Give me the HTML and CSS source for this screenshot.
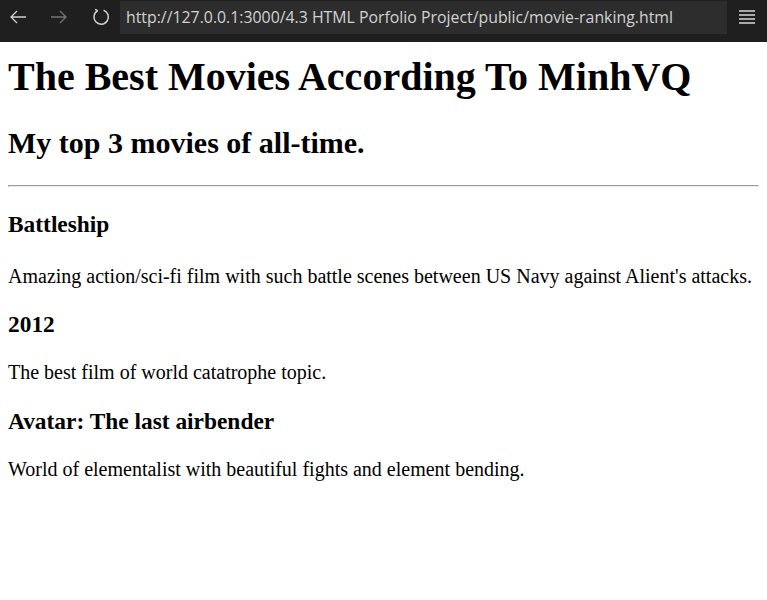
FILE: index.html
```html
<!DOCTYPE html>
<html>
<head>
<meta charset="utf-8">
<link rel="stylesheet" href="styles.css">
</head>
<body>
<div class="toolbar">
  <span class="nav-btn back">
    <svg width="18" height="16" viewBox="0 0 18 16"><path d="M17 8H2M8 2L2 8l6 6" fill="none" stroke="#d0d0d0" stroke-width="1.3"/></svg>
  </span>
  <span class="nav-btn forward">
    <svg width="18" height="16" viewBox="0 0 18 16"><path d="M1 8h15M10 2l6 6-6 6" fill="none" stroke="#747474" stroke-width="1.3"/></svg>
  </span>
  <span class="nav-btn reload">
    <svg width="18" height="18" viewBox="0 0 18 18"><path d="M11.6 2.2A7.2 7.2 0 1 1 5.8 2.6M5.8 2.6L3 1.4" fill="none" stroke="#d0d0d0" stroke-width="1.5"/></svg>
  </span>
  <div class="address">http://127.0.0.1:3000/4.3 HTML Porfolio Project/public/movie-ranking.html</div>
  <span class="menu">
    <svg width="16" height="14" viewBox="0 0 16 14"><path d="M0 1h16M0 5h16M0 9h16M0 13h16" stroke="#d8d8d8" stroke-width="1.5"/></svg>
  </span>
</div>
<div class="page">
  <h1>The Best Movies According To MinhVQ</h1>
  <h2>My top 3 movies of all-time.</h2>
  <hr>
  <h3 class="first-movie">Battleship</h3>
  <p>Amazing action/sci-fi film with such battle scenes between US Navy against Alient's attacks.</p>
  <h3>2012</h3>
  <p>The best film of world catatrophe topic.</p>
  <h3>Avatar: The last airbender</h3>
  <p>World of elementalist with beautiful fights and element bending.</p>
</div>
</body>
</html>
```

FILE: styles.css
```css
html, body {
  margin: 0;
  padding: 0;
  background: #fff;
}
.toolbar {
  height: 42px;
  background: #1f1f1f;
  display: flex;
  align-items: flex-start;
  font-family: "Open Sans", "Noto Sans", sans-serif;
}
.nav-btn {
  height: 33px;
  display: flex;
  align-items: center;
  justify-content: center;
}
.back {
  width: 36px;
}
.forward {
  width: 45px;
}
.reload {
  width: 39px;
}
.address {
  margin-top: 1px;
  width: 607px;
  height: 33px;
  background: #2d2d2d;
  color: #d2d2d2;
  font-size: 15.85px;
  line-height: 32px;
  padding-left: 6px;
  box-sizing: border-box;
  white-space: nowrap;
  overflow: hidden;
}
.menu {
  width: 40px;
  height: 34px;
  display: flex;
  align-items: center;
  justify-content: center;
}
.page {
  padding: 0 8px;
  font-family: "Liberation Serif", "Times New Roman", serif;
  color: #000;
  font-size: 20px;
}
.page h1 {
  margin-top: 10.5px;
}
.page .first-movie {
  margin-bottom: 27px;
}
```
